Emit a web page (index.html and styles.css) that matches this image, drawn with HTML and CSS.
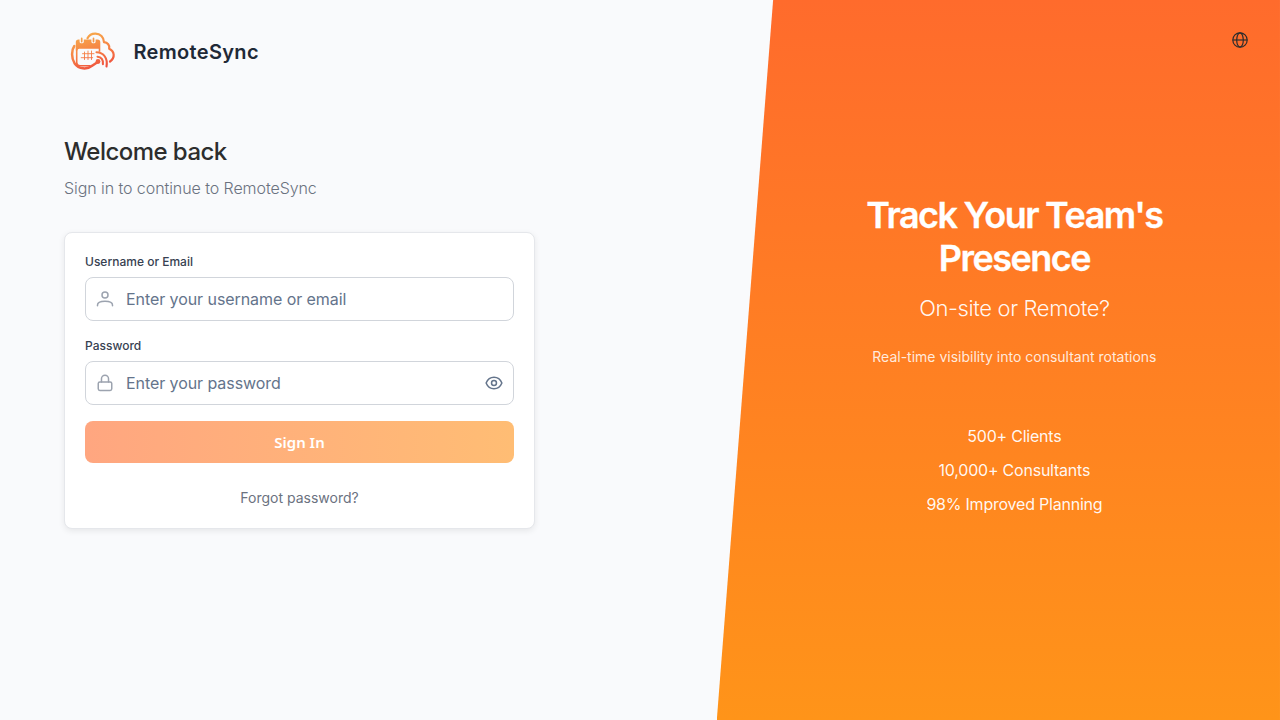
FILE: index.html
```html
<!DOCTYPE html>
<html lang="en">
<head>
<meta charset="utf-8">
<title>RemoteSync</title>
<link rel="stylesheet" href="styles.css">
</head>
<body>
<div class="page">
  <main class="login">
    <header class="brand">
      <svg class="brand-logo" viewBox="0 0 70 55" fill="none" stroke="url(#warm)" stroke-linecap="round" stroke-linejoin="round">
        <defs>
          <linearGradient id="warm" gradientUnits="userSpaceOnUse" x1="25" y1="8" x2="36" y2="46">
            <stop offset="0" stop-color="#f7aa4b"/><stop offset=".5" stop-color="#f68145"/><stop offset="1" stop-color="#ee4b3e"/>
          </linearGradient>
        </defs>
        <path stroke-width="2.200" d="M27.500 13.200c1.500-3 4.500-4.700 8-4.600 4.800.100 8.300 3.600 8.500 8.600 3.700.400 5.800 3 5.200 6.500 5.300 2.500 6.300 8.700.800 12.800"/>
        <path stroke-width="2.500" d="M14.300 21C11.300 25.200 11.300 33 14.500 38.200c4.500 6.300 12.500 6.700 18 2.300L38.500 36.500"/>
        <path stroke-width="1.600" d="M16.700 22V37.500c0 2.200 1 3.200 3.200 3.200h10"/>
        <path fill="url(#warm)" stroke="none" d="M15.800 25.500V17.200c0-1.800 1-2.700 2.800-2.700h1v2.200c0 2.200 4.200 2.200 4.200 0v-2.200h7.600v2.200c0 2.200 4.200 2.200 4.200 0v-2.200h2c1.800 0 2.700.900 2.700 2.700v9.500h-1.600v-3h-19.500q-1.800 0-1.800 1.800z"/>
        <path stroke-width="1.700" d="M21.700 13.400v3.200M33.500 13.400v3.200"/>
        <path stroke-width=".9" d="M24.500 27v7.500M28 26v8.500M31.500 26v8.500M22.500 28.700h11.500M21.200 32.700h11.500"/>
        <circle fill="url(#warm)" stroke="none" cx="38" cy="36.500" r="2.400"/>
        <path stroke-width="2.100" d="M37.500 31.700c3.700.300 6 3 5.400 7.500M36.500 27.300c7 .200 11.500 5.600 10 14.200"/>
      </svg>
      <span class="brand-name">RemoteSync</span>
    </header>
    <h1 class="title">Welcome back</h1>
    <p class="subtitle">Sign in to continue to RemoteSync</p>
    <form class="card">
      <label class="label" for="user">Username or Email</label>
      <div class="field">
        <svg class="icon icon-muted" viewBox="0 0 24 24"><path d="M16 6.500a4 4 0 1 1-8 0 4 4 0 0 1 8 0M2 21v-1c0-3.300 3.700-5 10-5s10 1.700 10 5v1"/></svg>
        <input class="input" id="user" type="text" placeholder="Enter your username or email">
      </div>
      <label class="label" for="pass">Password</label>
      <div class="field">
        <svg class="icon icon-muted" viewBox="0 0 24 24"><path d="M7.300 10.500V6.300a4.700 4.700 0 0 1 9.400 0v4.200"/><rect x="3" y="10.500" width="18" height="11.500" rx="2.200"/></svg>
        <input class="input" id="pass" type="password" placeholder="Enter your password">
        <svg class="icon icon-eye" viewBox="0 0 24 24"><path d="M1.500 12C3.500 7 7.300 4.300 12 4.300S20.500 7 22.500 12c-2 5-5.800 7.700-10.500 7.700S3.500 17 1.500 12z"/><circle cx="12" cy="12" r="3.300"/></svg>
      </div>
      <button class="submit" type="button">Sign In</button>
      <a class="forgot">Forgot password?</a>
    </form>
  </main>
  <aside class="promo">
    <svg class="globe" viewBox="0 0 16 16"><circle cx="8" cy="8" r="7.200"/><ellipse cx="8" cy="8" rx="3.300" ry="7.200"/><path d="M.8 8h14.400"/></svg>
    <h2 class="promo-title">Track Your Team's Presence</h2>
    <p class="promo-lead">On-site or Remote?</p>
    <p class="promo-text">Real-time visibility into consultant rotations</p>
    <ul class="stats"><li>500+ Clients</li><li>10,000+ Consultants</li><li>98% Improved Planning</li></ul>
  </aside>
</div>
</body>
</html>
```
FILE: styles.css
```css
* { box-sizing: border-box; }
body { margin: 0; background: #f9fafc; font-family: Inter, sans-serif; }
h1, h2, p, ul { margin: 0; padding: 0; }
.page { display: grid; grid-template-columns: 56% 44%; height: 720px; overflow: hidden; background: #f9fafc; }
.login { padding: 24px 64px; }
.brand { display: flex; align-items: center; height: 56px; margin-left: -4px; }
.brand-logo { width: 70px; height: 55px; }
.brand-name { margin-left: 3.5px; font-size: 20px; font-weight: 600; letter-spacing: .32px; color: #1f2937; }
.title { margin-top: 54px; font-size: 24px; line-height: 36px; font-weight: 500; letter-spacing: -.54px; color: #2d2d2d; }
.subtitle { margin-top: 6px; font-size: 16px; line-height: 24px; font-weight: 300; letter-spacing: -.075px; color: #6b7280; }
.card { display: flex; flex-direction: column; width: 471px; height: 297px; margin-top: 32px; padding: 20px; background: #fff; border: 1px solid #e5e7eb; border-radius: 8px; box-shadow: 0 2px 6px rgba(0,0,0,.08); }
.label { height: 16px; margin-bottom: 8px; font-size: 12px; line-height: 18px; font-weight: 500; color: #374151; }
.field { display: flex; align-items: center; height: 44px; margin-bottom: 16px; padding: 0 10px; border: 1px solid #d1d5db; border-radius: 8px; }
.icon { flex: none; fill: none; stroke-linecap: round; stroke-linejoin: round; }
.icon-muted { width: 18px; height: 18px; stroke: #9ca3af; stroke-width: 2; }
.icon-eye { width: 18px; height: 18px; stroke: #64748b; stroke-width: 2; }
.input { flex: 1; min-width: 0; margin-left: 12px; padding: 0; border: 0; outline: 0; background: transparent; font-family: Inter, sans-serif; font-size: 16px; line-height: 24px; letter-spacing: -.07px; }
.input::placeholder { color: #64748b; opacity: 1; }
.submit { flex: none; height: 42px; border: 0; border-radius: 8px; background: linear-gradient(90deg, #ffa680, #ffbd74); color: #fff; font-family: "Noto Sans", sans-serif; font-size: 15px; font-weight: 600; }
.forgot { margin-top: 25px; text-align: center; font-size: 14px; line-height: 20px; color: #6b7280; }
.promo { position: relative; display: flex; flex-direction: column; align-items: center; padding: 194px 64px 0 96px; background: linear-gradient(180deg, #ff6b2c, #ff9419); clip-path: polygon(10% 0, 100% 0, 100% 100%, 0 100%); color: #fff; text-align: center; }
.globe { position: absolute; top: 32px; right: 32px; width: 16px; height: 16px; fill: none; stroke: #2d2d2d; stroke-width: 1.2; }
.promo-title { width: 320px; font-size: 36px; line-height: 43.2px; font-weight: 600; letter-spacing: -1.5px; word-spacing: -.5px; -webkit-text-stroke: .3px #fff; }
.promo-lead { margin-top: 12px; font-size: 22px; line-height: 33px; font-weight: 300; letter-spacing: -.38px; color: rgba(255,255,255,.95); }
.promo-text { margin-top: 20px; font-size: 14px; line-height: 23px; color: rgba(255,255,255,.85); }
.stats { display: flex; flex-direction: column; gap: 10px; margin-top: 56px; list-style: none; font-size: 16px; line-height: 24px; letter-spacing: -.22px; color: rgba(255,255,255,.95); }
```
